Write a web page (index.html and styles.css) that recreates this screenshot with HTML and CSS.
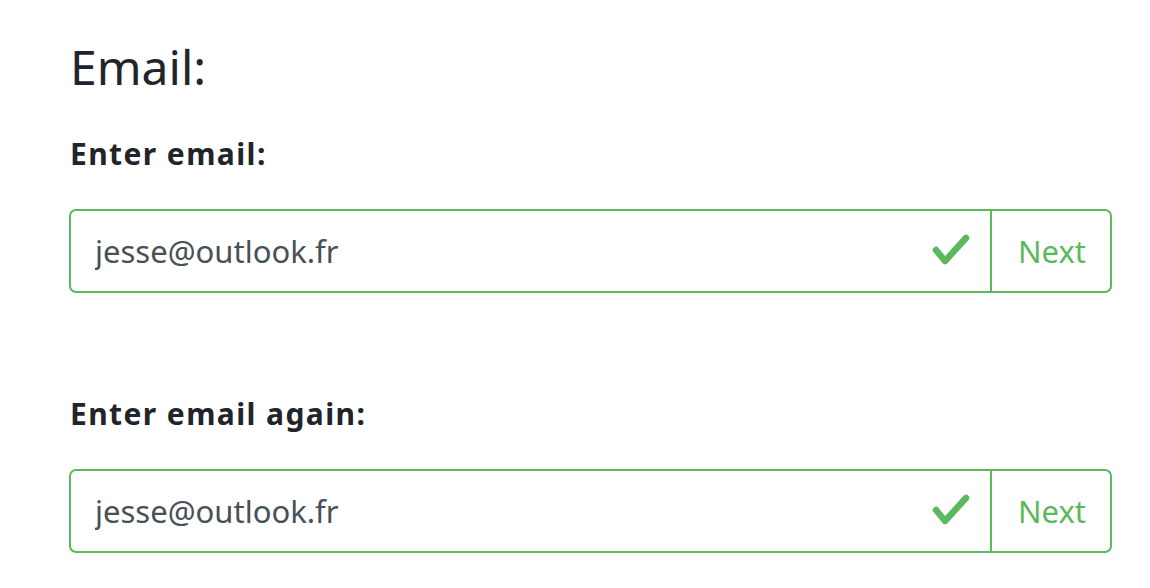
FILE: index.html
```html
<!DOCTYPE html>
<html>
<head>
	<meta charset="utf-8">
	<title>Email</title>
	<link rel="stylesheet" href="styles.css">
</head>
<body>
	<div class="page">
		<h1 class="title">Email:</h1>

		<div class="field">
			<label class="label" for="email1">Enter email:</label>
			<div class="group">
				<input class="input" id="email1" type="text" value="jesse@outlook.fr">
				<span class="check">
					<svg width="40" height="34" viewBox="0 0 40 34"><polyline points="4,16 13,27 34,4" fill="none" stroke="#5cb85c" stroke-width="6.5" stroke-linecap="round" stroke-linejoin="round"/></svg>
				</span>
				<button class="next">Next</button>
			</div>
		</div>

		<div class="field second">
			<label class="label" for="email2">Enter email again:</label>
			<div class="group">
				<input class="input" id="email2" type="text" value="jesse@outlook.fr">
				<span class="check">
					<svg width="40" height="34" viewBox="0 0 40 34"><polyline points="4,16 13,27 34,4" fill="none" stroke="#5cb85c" stroke-width="6.5" stroke-linecap="round" stroke-linejoin="round"/></svg>
				</span>
				<button class="next">Next</button>
			</div>
		</div>
	</div>
</body>
</html>
```

FILE: styles.css
```css
body {
	margin: 0;
	font-family: "Noto Sans", Lato, sans-serif;
	color: #212529;
	background: #fff;
}
.page {
	padding: 38px 38px 0 69px;
}
.title {
	margin: 0 0 40px 1px;
	font-size: 48px;
	font-weight: 400;
	line-height: 1.2;
}
.field.second {
	margin-top: 103px;
}
.label {
	display: block;
	margin: 0 0 37px 1px;
	font-size: 30px;
	font-weight: 700;
	letter-spacing: 1.4px;
	line-height: 1.2;
}
.group {
	display: flex;
	height: 84px;
	box-sizing: border-box;
	border: 2px solid #5cb85c;
	border-radius: 7px;
}
.input {
	flex: 1;
	min-width: 0;
	border: 0;
	outline: none;
	padding: 0 0 0 24px;
	font-family: inherit;
	font-size: 31px;
	color: #495057;
	background: transparent;
}
.check {
	display: flex;
	align-items: center;
	padding: 0 18px 0 12px;
}
.next {
	border: 0;
	border-left: 2px solid #5cb85c;
	background: transparent;
	padding: 0 24px 0 26px;
	font-family: inherit;
	font-size: 31px;
	color: #5cb85c;
	border-radius: 0 6px 6px 0;
}
```
